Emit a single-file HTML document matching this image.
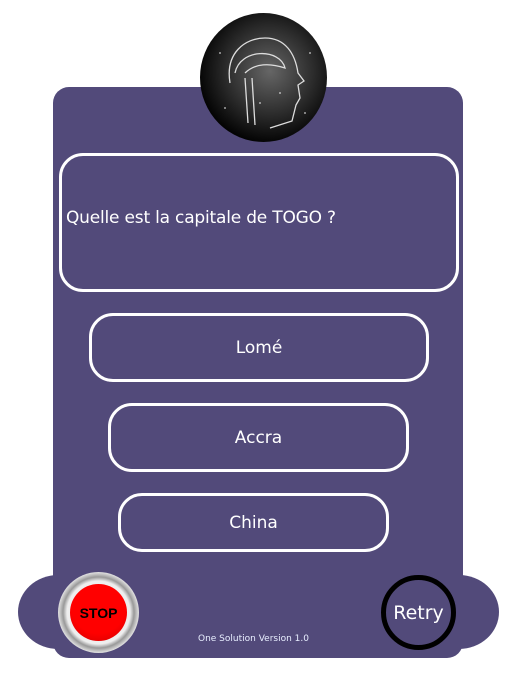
<!DOCTYPE html>
<html><head><meta charset="utf-8"><style>
body{margin:0;width:508px;height:677px;background:#fff;position:relative;overflow:hidden;font-family:"DejaVu Sans",Verdana,sans-serif;color:#fff}
.a{position:absolute;box-sizing:border-box}
.panel{left:53px;top:87px;width:410px;height:571px;background:#524a7a;border-radius:16px}
.wide{left:18px;top:575px;width:481px;height:74px;background:#524a7a;border-radius:40px/37px}
.box{border:3px solid #fff;border-radius:24px;display:flex;align-items:center;justify-content:center;font-size:17px}
</style></head><body>
<div class="a panel"></div>
<div class="a wide"></div>
<div class="a" style="left:200px;top:13px;width:127px;height:129px;border-radius:50%;background:radial-gradient(circle at 55% 45%,#666 0,#2a2a2a 45%,#000 75%);overflow:hidden">
<svg width="127" height="129" viewBox="0 0 127 129"><g fill="none" stroke="#ddd" stroke-width="1.3"><path d="M30 70 C25 40 45 25 65 25 C85 25 95 40 98 60 L104 68 L98 72 L100 85 L96 92 L92 108 L70 115"/><path d="M35 60 C40 35 80 35 85 55 C70 50 55 50 45 60"/><path d="M45 65 L48 110 M52 65 L55 112"/></g><g fill="#fff" opacity=".6"><circle cx="20" cy="40" r="1"/><circle cx="110" cy="40" r="1"/><circle cx="60" cy="90" r="1"/><circle cx="80" cy="80" r="1"/><circle cx="25" cy="95" r="1"/><circle cx="105" cy="100" r="1"/></g></svg></div>
<div class="a box" style="left:59px;top:153px;width:400px;height:139px;justify-content:flex-start;padding-left:4px;padding-bottom:10px;letter-spacing:-0.2px">Quelle est la capitale de TOGO ?</div>
<div class="a box" style="left:89px;top:313px;width:340px;height:69px">Lomé</div>
<div class="a box" style="left:108px;top:403px;width:301px;height:69px">Accra</div>
<div class="a box" style="left:118px;top:493px;width:271px;height:59px">China</div>
<div class="a" style="left:58px;top:572px;width:81px;height:81px;border-radius:50%;background:radial-gradient(circle,#eee 55%,#999 62%,#ddd 70%,#fff 80%);"></div>
<div class="a" style="left:70px;top:584px;width:57px;height:57px;border-radius:50%;background:radial-gradient(circle at 50% 40%,#f00 60%,#c00 100%);color:#000;font:bold 14px 'Liberation Sans',sans-serif;display:flex;align-items:center;justify-content:center">STOP</div>
<div class="a" style="left:381px;top:575px;width:75px;height:75px;border-radius:50%;border:5px solid #000;display:flex;align-items:center;justify-content:center;font-size:19px">Retry</div>
<div class="a" style="left:198px;top:634px;font-size:9px;color:#e8eeff">One Solution Version 1.0</div>
</body></html>
